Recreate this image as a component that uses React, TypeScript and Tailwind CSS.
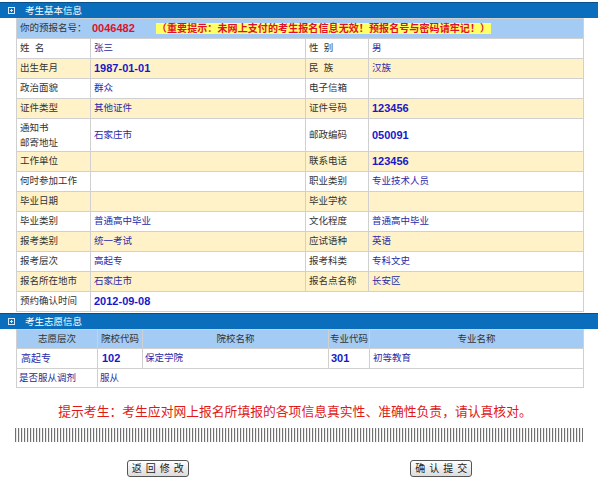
import React from 'react';

const LABEL = 'px-[3px] text-[#333] align-middle';
const VAL = 'px-[3px] text-[#2a2aa8] align-middle';

function Num({ children, red }: { children: React.ReactNode; red?: boolean }) {
    return (
        <span className={`font-['Liberation_Sans',sans-serif] font-bold text-[11px] ${red ? 'text-[#e0102a]' : 'text-[#1818c8]'}`}>
            {children}
        </span>
    );
}

function SectionHeader({ title }: { title: string }) {
    return (
        <div className="h-[16px] w-full bg-[#0a6ebd] border-t border-[#08508c] flex items-center">
            <svg width="7" height="7" viewBox="0 0 7 7" className="ml-[8px] mr-[10px]">
                <rect x="0.5" y="0.5" width="6" height="6" fill="none" stroke="#d8e8f8" strokeWidth="1" />
                <path d="M3.5 2v3M2 3.5h3" stroke="#d8e8f8" strokeWidth="1" />
            </svg>
            <span className="text-[9.5px] text-white leading-none">{title}</span>
        </div>
    );
}

const basicRows: [string, React.ReactNode, string, React.ReactNode][] = [
    ['姓\u00a0\u00a0名', '张三', '性\u00a0\u00a0别', '男'],
    ['出生年月', <Num>1987-01-01</Num>, '民\u00a0\u00a0族', '汉族'],
    ['政治面貌', '群众', '电子信箱', ''],
    ['证件类型', '其他证件', '证件号码', <Num>123456</Num>],
];

const moreRows: [string, React.ReactNode, string, React.ReactNode][] = [
    ['工作单位', '', '联系电话', <Num>123456</Num>],
    ['何时参加工作', '', '职业类别', '专业技术人员'],
    ['毕业日期', '', '毕业学校', ''],
    ['毕业类别', '普通高中毕业', '文化程度', '普通高中毕业'],
    ['报考类别', '统一考试', '应试语种', '英语'],
    ['报考层次', '高起专', '报考科类', '专科文史'],
    ['报名所在地市', '石家庄市', '报名点名称', '长安区'],
];

export default function App() {
    // 地址行插在证件类型之后，底色从白色开始交替
    const rowBg = (i: number) => (i % 2 === 0 ? 'bg-white' : 'bg-[#fff2c8]');

    return (
        <div className="w-[598px] h-[483px] bg-white pt-[2px] font-['Liberation_Sans','Noto_Sans_CJK_SC',sans-serif] text-[9.5px]">
            <SectionHeader title="考生基本信息" />

            {/* 基本信息 */}
            <table className="ml-[16px] w-[567px] table-fixed border-collapse">
                <colgroup>
                    <col className="w-[74px]" />
                    <col className="w-[215px]" />
                    <col className="w-[63px]" />
                    <col className="w-[215px]" />
                </colgroup>
                <tbody>
                    <tr className="h-[20px] bg-[#a3cbf3]">
                        <td colSpan={4} className="px-[3px] border border-[#d0d0d0]">
                            <div className="flex items-center">
                                <span className="text-[#333] w-[72px]">你的预报名号：</span>
                                <Num red>0046482</Num>
                                <span className="ml-[21px] bg-[#ffff66] text-[#e0102a] font-bold text-[10px] leading-[11px] px-[1px] tracking-[0.1px]">
                                    （重要提示：未网上支付的考生报名信息无效！预报名号与密码请牢记！）
                                </span>
                            </div>
                        </td>
                    </tr>
                    {basicRows.map((r, i) => (
                        <tr key={i} className={`h-[20px] ${rowBg(i)}`}>
                            <td className={`${LABEL} border border-[#d0d0d0]`}>{r[0]}</td>
                            <td className={`${VAL} border border-[#d0d0d0]`}>{r[1]}</td>
                            <td className={`${LABEL} border border-[#d0d0d0]`}>{r[2]}</td>
                            <td className={`${VAL} border border-[#d0d0d0]`}>{r[3]}</td>
                        </tr>
                    ))}
                    <tr className="h-[33px] bg-white">
                        <td className={`${LABEL} border border-[#d0d0d0] leading-[15px]`}>
                            通知书<br />邮寄地址
                        </td>
                        <td className={`${VAL} border border-[#d0d0d0]`}>石家庄市</td>
                        <td className={`${LABEL} border border-[#d0d0d0]`}>邮政编码</td>
                        <td className={`${VAL} border border-[#d0d0d0]`}><Num>050091</Num></td>
                    </tr>
                    {moreRows.map((r, i) => (
                        <tr key={i} className={`h-[20px] ${rowBg(i + 1)}`}>
                            <td className={`${LABEL} border border-[#d0d0d0]`}>{r[0]}</td>
                            <td className={`${VAL} border border-[#d0d0d0]`}>{r[1]}</td>
                            <td className={`${LABEL} border border-[#d0d0d0]`}>{r[2]}</td>
                            <td className={`${VAL} border border-[#d0d0d0]`}>{r[3]}</td>
                        </tr>
                    ))}
                    <tr className="h-[20px] bg-white">
                        <td className={`${LABEL} border border-[#d0d0d0]`}>预约确认时间</td>
                        <td colSpan={3} className={`${VAL} border border-[#d0d0d0]`}><Num>2012-09-08</Num></td>
                    </tr>
                </tbody>
            </table>

            <div className="mt-[1px]">
                <SectionHeader title="考生志愿信息" />
            </div>

            {/* 志愿信息 */}
            <table className="ml-[16px] w-[567px] table-fixed border-collapse">
                <colgroup>
                    <col className="w-[81px]" />
                    <col className="w-[45px]" />
                    <col className="w-[186px]" />
                    <col className="w-[41px]" />
                    <col className="w-[214px]" />
                </colgroup>
                <tbody>
                    <tr className="h-[19px] bg-[#a3cbf3] text-[#333]">
                        <td className="text-center border border-[#d0d0d0]">志愿层次</td>
                        <td className="text-center border border-[#d0d0d0]">院校代码</td>
                        <td className="text-center border border-[#d0d0d0]">院校名称</td>
                        <td className="text-center border border-[#d0d0d0]">专业代码</td>
                        <td className="text-center border border-[#d0d0d0]">专业名称</td>
                    </tr>
                    <tr className="h-[20px] bg-white">
                        <td className="px-[4px] text-[#2a2aa8] border border-[#d0d0d0] text-[10px]">高起专</td>
                        <td className="px-[4px] border border-[#d0d0d0]"><Num>102</Num></td>
                        <td className="px-[2px] text-[#2a2aa8] border border-[#d0d0d0]">保定学院</td>
                        <td className="px-[2px] border border-[#d0d0d0]"><Num>301</Num></td>
                        <td className="px-[3px] text-[#2a2aa8] border border-[#d0d0d0]">初等教育</td>
                    </tr>
                    <tr className="h-[19px] bg-white">
                        <td className="px-[2px] text-[#2a2a90] border border-[#d0d0d0]">是否服从调剂</td>
                        <td colSpan={4} className="px-[2px] text-[#2a2aa8] border border-[#d0d0d0]">服从</td>
                    </tr>
                </tbody>
            </table>

            <p className="w-[590px] mt-[16px] text-center text-[12.8px] leading-[16px] text-[#e01818]">
                提示考生：考生应对网上报名所填报的各项信息真实性、准确性负责，请认真核对。
            </p>

            <div className="ml-[15px] mt-[8px] w-[568px] h-[14px] bg-[repeating-linear-gradient(90deg,#707070_0px,#707070_1px,#e8e8e8_1px,#e8e8e8_2px,#ffffff_2px,#ffffff_3px)]" />

            <div className="ml-[16px] w-[567px] mt-[18px] flex">
                <div className="flex-1 flex justify-center">
                    <button className="w-[62px] h-[17px] border border-[#555] rounded-[3px] bg-gradient-to-b from-white to-[#dcdcdc] text-[10px] text-[#222] tracking-[4px] leading-none pl-[4px]">
                        返回修改
                    </button>
                </div>
                <div className="flex-1 flex justify-center">
                    <button className="w-[62px] h-[17px] border border-[#555] rounded-[3px] bg-gradient-to-b from-white to-[#dcdcdc] text-[10px] text-[#222] tracking-[4px] leading-none pl-[4px]">
                        确认提交
                    </button>
                </div>
            </div>
        </div>
    );
}
